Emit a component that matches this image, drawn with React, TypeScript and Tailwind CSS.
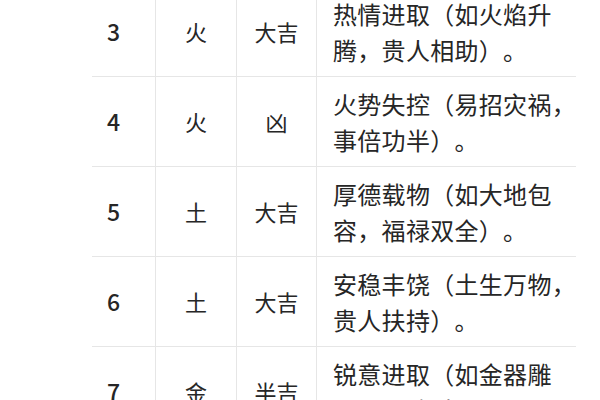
const rows = [
  { n: '3', el: '火', luck: '大吉', desc: ['热情进取（如火焰升', '腾，贵人相助）。'] },
  { n: '4', el: '火', luck: '凶', desc: ['火势失控（易招灾祸，', '事倍功半）。'] },
  { n: '5', el: '土', luck: '大吉', desc: ['厚德载物（如大地包', '容，福禄双全）。'] },
  { n: '6', el: '土', luck: '大吉', desc: ['安稳丰饶（土生万物，', '贵人扶持）。'] },
  { n: '7', el: '金', luck: '半吉', desc: ['锐意进取（如金器雕', '琢，需防过刚）。'] },
]

export default function App() {
  return (
    <div className="h-[400px] w-[600px] overflow-hidden bg-white font-['Noto_Sans_CJK_SC',sans-serif] text-[#262626] [text-spacing-trim:space-all]">
      <div className="-mt-[13px] ml-[92px] w-[484px]">
        {rows.map((r) => (
          <div key={r.n} className="flex h-[90px] border-b border-[#e6e6e6]">
            <div className="flex w-[63px] items-center pl-[15px] text-[23px] font-medium">{r.n}</div>
            <div className="flex w-[81px] items-center justify-center border-l border-[#e6e6e6] text-[22px]">{r.el}</div>
            <div className="flex w-[80px] items-center justify-center border-l border-[#e6e6e6] text-[22px]">{r.luck}</div>
            <div className="flex flex-1 flex-col justify-center whitespace-nowrap border-l border-[#e6e6e6] pl-[16px] text-[24px] leading-[36px] tracking-[0.3px]">
              {r.desc.map((line) => (
                <span key={line}>{line}</span>
              ))}
            </div>
          </div>
        ))}
      </div>
    </div>
  )
}
